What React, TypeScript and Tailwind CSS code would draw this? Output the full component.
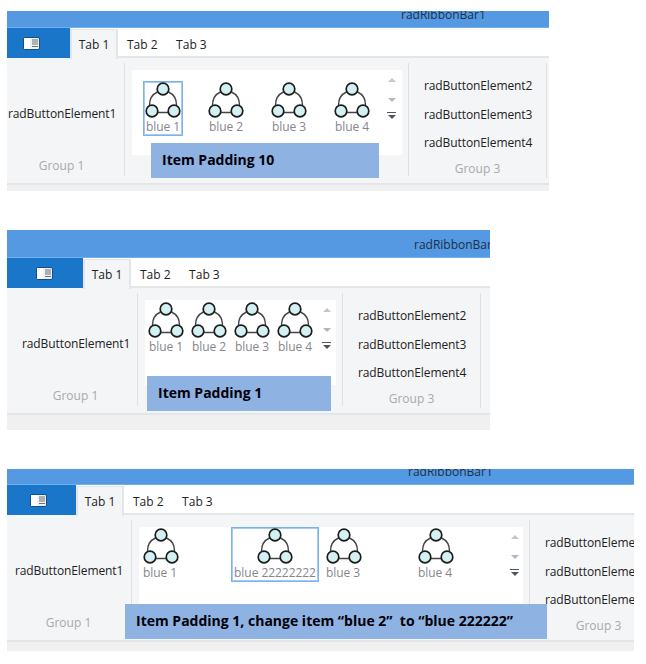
const FONT = "font-['Open_Sans','Noto_Sans',sans-serif]";

function CircleIcon() {
  return (
    <svg width="36" height="36" viewBox="0 0 36 36" className="block shrink-0">
      <path d="M4.5 23C4.5 17 7 12.5 12.5 10M31.5 23C31.5 17 29 12.5 23.5 10M13 30.5H23" fill="none" stroke="#444" strokeWidth="1.4" />
      <circle cx="18" cy="7" r="5.8" fill="#d3f1f3" stroke="#1c1c1c" strokeWidth="1.7" />
      <circle cx="7" cy="29" r="5.8" fill="#d3f1f3" stroke="#1c1c1c" strokeWidth="1.7" />
      <circle cx="29" cy="29" r="5.8" fill="#d3f1f3" stroke="#1c1c1c" strokeWidth="1.7" />
    </svg>
  );
}

function AppIcon() {
  return (
    <svg width="17" height="13" viewBox="0 0 17 13" className="block">
      <rect x="0.5" y="0.5" width="16" height="12" rx="1.5" fill="#eef1f4" stroke="#0f4f8c" />
      <rect x="1" y="1" width="6" height="11" fill="#ffffff" />
      <path d="M9 3H15M9 5H15M9 7H15M9 9.5H15" stroke="#6a6f75" strokeWidth="1" />
    </svg>
  );
}

function GalleryItem({ label, className, selected }: { label: string; className: string; selected?: boolean }) {
  return (
    <div
      className={`flex flex-col shrink-0 h-[55px] border ${
        selected ? "border-[#7fb2ea] shadow-[inset_0_0_0_1px_#a5cbf3]" : "border-transparent"
      } ${className}`}
    >
      <CircleIcon />
      <div className="text-[12px] leading-[16px] mt-[1px] tracking-[-0.05px] whitespace-nowrap text-[#85868c]">{label}</div>
    </div>
  );
}

function ScrollArrows({ className }: { className: string }) {
  return (
    <div className={`absolute flex flex-col items-center ${className}`}>
      <div className="w-0 h-0 border-x-[4px] border-x-transparent border-b-[4px] border-b-[#c4c6c9]" />
      <div className="w-0 h-0 mt-[16px] border-x-[4px] border-x-transparent border-t-[4px] border-t-[#b4b6b9]" />
      <div className="w-[9px] h-[1px] mt-[10px] bg-[#50565e]" />
      <div className="w-0 h-0 mt-[2px] border-x-[4px] border-x-transparent border-t-[4px] border-t-[#50565e]" />
    </div>
  );
}

function Group3() {
  return (
    <div className="flex flex-col shrink-0 w-[137px] pl-[15px]">
      <div className="flex flex-col gap-[12.7px] mt-[20px] text-[12px] leading-[16px] tracking-[-0.1px] whitespace-nowrap text-[#222]">
        <div>radButtonElement2</div>
        <div>radButtonElement3</div>
        <div>radButtonElement4</div>
      </div>
      <div className="mt-[10px] w-[107px] text-center text-[12px] leading-[16px] text-[#a9a9a9]">Group 3</div>
    </div>
  );
}

function Ribbon({
  width,
  title,
  titleHeight,
  titleText,
  appWidth,
  footer,
  group1,
  galleryWidth,
  gallery,
  arrows,
  note,
  noteClass,
}: {
  width: string;
  title: string;
  titleHeight: string;
  titleText: string;
  appWidth: string;
  footer: string;
  group1: string;
  galleryWidth: string;
  gallery: React.ReactNode;
  arrows: string;
  note: string;
  noteClass: string;
}) {
  return (
    <div className={`relative overflow-hidden ml-[7px] ${width}`}>
      <div className={`overflow-hidden bg-[#5599e3] border-b border-[#6bb0f0] ${titleHeight}`}>
        <div className={`text-[12px] leading-[16px] whitespace-nowrap text-[#1c3048] ${title}`}>{titleText}</div>
      </div>
      <div className="flex h-[30px] bg-white border-b-2 border-[#e4e5e6]">
        <div className={`flex items-center h-[30px] bg-[#1976c9] shrink-0 ${appWidth}`}>
          <AppIcon />
        </div>
        <div className="flex items-center justify-center w-[48px] h-[30px] mt-[1px] bg-[#f4f5f7] border-x-2 border-t border-[#e4e5e6] text-[12px] text-[#222]">
          Tab 1
        </div>
        <div className="flex items-center pt-[5px] text-[12px] text-[#222] ml-[9px] gap-[18.5px]">
          <span>Tab 2</span>
          <span>Tab 3</span>
        </div>
      </div>
      <div className="flex h-[127px] bg-[#f4f5f7] border-b-2 border-[#e4e5e6]">
        <div className={`flex flex-col shrink-0 ${group1}`}>
          <div className="w-[107px] mt-[48px] text-[12px] leading-[16px] tracking-[-0.1px] whitespace-nowrap text-[#222]">radButtonElement1</div>
          <div className="w-[107px] mt-[36px] text-center text-[12px] leading-[16px] text-[#a9a9a9]">Group 1</div>
        </div>
        <div className="w-[1px] h-[113px] mt-[5px] bg-[#dfe0e2] shrink-0" />
        <div className={`relative flex h-[85px] mt-[12px] ml-[7px] mr-[6px] bg-white shrink-0 ${galleryWidth}`}>
          {gallery}
          <ScrollArrows className={arrows} />
        </div>
        <div className="w-[1px] h-[113px] mt-[5px] bg-[#dfe0e2] shrink-0" />
        <Group3 />
        <div className="w-[1px] h-[115px] mt-[5px] bg-[#dfe0e2] shrink-0" />
      </div>
      <div className={`bg-[#f0f0f0] ${footer}`} />
      <div className={`absolute flex items-center h-[35px] pb-[2px] bg-[#8eb2e2] text-[14px] font-bold whitespace-nowrap text-[#000008] ${noteClass}`}>
        {note}
      </div>
    </div>
  );
}

export default function App() {
  return (
    <div className={`w-[646px] h-[664px] overflow-hidden bg-white pt-[11px] ${FONT}`}>
      <Ribbon
        width="w-[542px]"
        title="pl-[394px] -mt-[4px]"
        titleHeight="h-[17px]"
        titleText="radRibbonBar1"
        appWidth="w-[63px] pl-[16px]"
        footer="h-[6px]"
        group1="w-[117px] pl-[1px]"
        galleryWidth="w-[270px]"
        arrows="left-[255px] top-[8px]"
        gallery={
          <div className="flex gap-[23px] ml-[11px] mt-[11px]">
            <GalleryItem label="blue 1" selected className="w-[40px] items-center" />
            <GalleryItem label="blue 2" className="w-[40px] items-center" />
            <GalleryItem label="blue 3" className="w-[40px] items-center" />
            <GalleryItem label="blue 4" className="w-[40px] items-center" />
          </div>
        }
        note="Item Padding 10"
        noteClass="left-[144px] top-[132px] w-[228px] pl-[11px]"
      />
      <div className="h-[39px]" />
      <Ribbon
        width="w-[483px]"
        title="pl-[407px] mt-[7px]"
        titleHeight="h-[28px]"
        titleText="radRibbonBar1"
        appWidth="w-[76px] pl-[29px]"
        footer="h-[15px]"
        group1="w-[130px] pl-[15px]"
        galleryWidth="w-[191px]"
        arrows="left-[177px] top-[8px]"
        gallery={
          <div className="flex gap-[7px] ml-[3px] mt-[1px]">
            <GalleryItem label="blue 1" className="w-[36px] items-center" />
            <GalleryItem label="blue 2" className="w-[36px] items-center" />
            <GalleryItem label="blue 3" className="w-[36px] items-center" />
            <GalleryItem label="blue 4" className="w-[36px] items-center" />
          </div>
        }
        note="Item Padding 1"
        noteClass="left-[140px] top-[146px] w-[184px] pl-[11px]"
      />
      <div className="h-[39px]" />
      <Ribbon
        width="w-[627px]"
        title="pl-[401px] -mt-[5px]"
        titleHeight="h-[16px]"
        titleText="radRibbonBar1"
        appWidth="w-[69px] pl-[23px]"
        footer="h-[9px]"
        group1="w-[124px] pl-[8px]"
        galleryWidth="w-[384px]"
        arrows="left-[371px] top-[8px]"
        gallery={
          <div className="flex gap-[4px] ml-0 mt-0">
            <GalleryItem label="blue 1" className="w-[88px] pl-[3px]" />
            <GalleryItem label="blue 22222222" selected className="w-[88px] items-center" />
            <GalleryItem label="blue 3" className="w-[88px] pl-[2px]" />
            <GalleryItem label="blue 4" className="w-[88px] pl-[2px]" />
          </div>
        }
        note="Item Padding 1, change item “blue 2”&nbsp; to “blue 222222”"
        noteClass="left-[118px] top-[135px] w-[422px] pl-[11px]"
      />
    </div>
  );
}
